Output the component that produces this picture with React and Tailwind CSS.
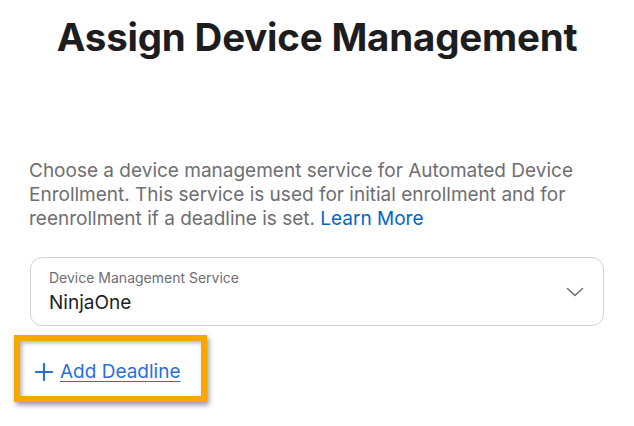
import React from 'react';

const ChevronDown = () => (
  <svg width="18" height="10" viewBox="0 0 18 10" fill="none">
    <path d="M1.5 1.5 L9 8.5 L16.5 1.5" stroke="#6e6e73" strokeWidth="1.5" strokeLinecap="round" strokeLinejoin="round" />
  </svg>
);

const Plus = () => (
  <svg width="18" height="18" viewBox="0 0 18 18" fill="none">
    <path d="M9 1 V17 M1 9 H17" stroke="#2a6fd6" strokeWidth="2.2" strokeLinecap="round" />
  </svg>
);

const App = () => {
  return (
    <div className="w-[634px] h-[426px] bg-white overflow-hidden" style={{ fontFamily: 'Inter, "Noto Sans", sans-serif' }}>
      <h1 className="pt-[13px] text-center text-[38.5px] leading-[48px] font-bold text-[#1d1d1f] tracking-[-0.2px]">
        Assign Device Management
      </h1>

      <div className="px-[29px] mt-[98px]">
        <p className="text-[19px] leading-[24px] text-[#6e6e73] whitespace-nowrap">
          Choose a device management service for Automated Device
          <br />
          Enrollment. This service is used for initial enrollment and for
          <br />
          reenrollment if a deadline is set. <span className="text-[#0066cc]">Learn More</span>
        </p>

        {/* Select */}
        <div className="mt-[26px] ml-px w-[574px] h-[69px] rounded-[12px] border border-[#d2d2d7] flex items-center justify-between pl-[18px] pr-[19px]">
          <div className="flex flex-col pt-px">
            <span className="text-[14px] leading-[18px] text-[#6e6e73]">Device Management Service</span>
            <span className="mt-[4px] text-[19px] leading-[24px] text-[#1d1d1f]">NinjaOne</span>
          </div>
          <ChevronDown />
        </div>
      </div>

      {/* Highlighted action */}
      <div className="ml-[14px] mt-[9px] w-[193px] h-[67px] border-[6px] border-[#f6a800] shadow-[2px_3px_5px_rgba(0,0,0,0.4),inset_2px_2px_4px_rgba(0,0,0,0.3)] flex items-center gap-[7px] pl-[15px] pt-[6px]">
        <Plus />
        <span className="text-[#2a6fd6] text-[19px] leading-[24px] underline underline-offset-[3px]">Add Deadline</span>
      </div>
    </div>
  );
};

export default App;
